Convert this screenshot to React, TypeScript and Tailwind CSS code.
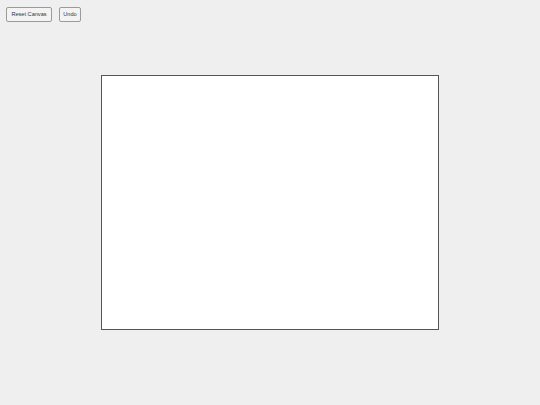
import React, { useRef } from 'react';

const App: React.FC = () => {
  const canvasRef = useRef<HTMLCanvasElement>(null);

  const resetCanvas = () => {
    const ctx = canvasRef.current?.getContext('2d');
    if (!ctx || !canvasRef.current) return;
    ctx.clearRect(0, 0, canvasRef.current.width, canvasRef.current.height);
  };

  return (
    <div className="min-h-screen w-full bg-[#efefef] font-['Liberation_Sans',Arial,sans-serif]">
      <div className="flex gap-[7px] pl-[6px] pt-[7px]">
        <button
          onClick={resetCanvas}
          className="h-[15px] w-[46px] rounded-[2px] border border-[#9a9a9a] bg-[#f3f3f3] text-[5.6px] leading-none text-[#333]"
        >
          Reset Canvas
        </button>
        <button className="h-[15px] w-[22px] rounded-[2px] border border-[#9a9a9a] bg-[#f3f3f3] text-[5.6px] leading-none text-[#333]">
          Undo
        </button>
      </div>

      <div className="mt-[53px] flex justify-center">
        <canvas
          ref={canvasRef}
          width={336}
          height={253}
          className="box-content block border border-[#555] bg-white"
        />
      </div>
    </div>
  );
};

export default App;
